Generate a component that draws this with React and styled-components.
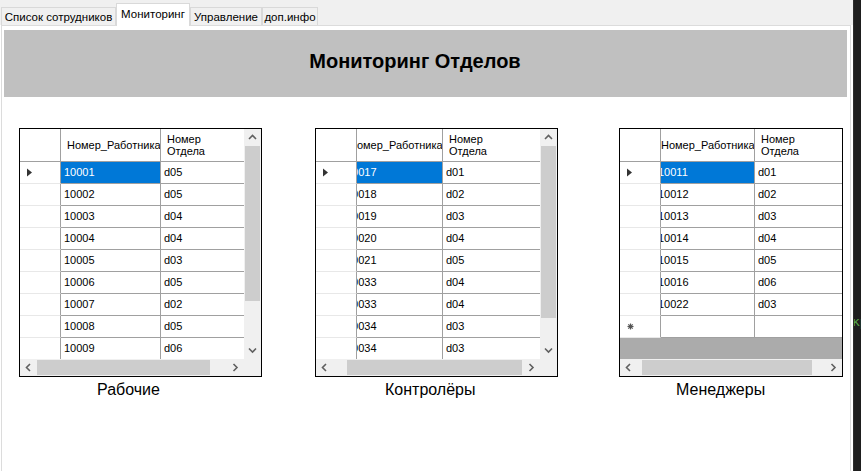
import React from "react";
import styled, { createGlobalStyle } from "styled-components";

const GlobalStyle = createGlobalStyle`
  html, body {
    margin: 0;
    padding: 0;
    overflow: hidden;
    background: #fff;
  }
  body {
    font-family: "Liberation Sans", Arial, sans-serif;
  }
`;

const Screen = styled.div`
  display: flex;
  width: 861px;
  height: 471px;
  overflow: hidden;
`;

const Window = styled.div`
  width: 853px;
  flex-shrink: 0;
  display: flex;
  flex-direction: column;
  background: #fff;
`;

const TabStrip = styled.div`
  height: 25px;
  flex-shrink: 0;
  background: #f0f0f0;
  display: flex;
  align-items: flex-end;
  padding-left: 1px;
  position: relative;
  z-index: 1;
`;

const Tab = styled.div`
  box-sizing: border-box;
  width: ${(p) => p.$w}px;
  height: ${(p) => (p.$active ? 23 : 18)}px;
  margin-bottom: ${(p) => (p.$active ? -1 : 0)}px;
  border: 1px solid #d9d9d9;
  border-bottom: none;
  background: ${(p) => (p.$active ? "#fff" : "#f0f0f0")};
  font-size: 11.5px;
  color: #000;
  display: flex;
  align-items: center;
  justify-content: center;
  padding-bottom: ${(p) => (p.$active ? 3 : 0)}px;
  white-space: nowrap;
`;

const TabPage = styled.div`
  flex: 1;
  margin: 0 2px 0 1px;
  border: 1px solid #dcdcdc;
  border-bottom: none;
  background: #fff;
  padding: 4px 3px 0 2px;
  display: flex;
  flex-direction: column;
`;

const TitlePanel = styled.div`
  height: 67px;
  background: #c0c0c0;
  display: flex;
  align-items: center;
  justify-content: center;
  padding: 0 21px 4px 0;
  box-sizing: border-box;
`;

const Title = styled.h1`
  margin: 0;
  font-size: 20px;
  font-weight: bold;
  color: #000;
`;

const GridsRow = styled.div`
  display: flex;
  align-items: flex-start;
  margin-top: 31px;
`;

const Group = styled.div`
  display: flex;
  flex-direction: column;
  margin-left: ${(p) => p.$ml}px;
`;

const Caption = styled.div`
  font-size: 16px;
  color: #000;
  margin-top: 4px;
  padding-left: ${(p) => p.$indent}px;
`;

const Frame = styled.div`
  box-sizing: border-box;
  width: ${(p) => p.$w}px;
  height: 249px;
  border: 1px solid #000;
  display: grid;
  grid-template-columns: ${(p) => (p.$vscroll ? "1fr 17px" : "1fr")};
  grid-template-rows: 1fr 17px;
`;

const Viewport = styled.div`
  overflow: hidden;
  background: #ababab;
  font-size: 11px;
  color: #000;
`;

const Row = styled.div`
  display: flex;
  height: ${(p) => (p.$head ? 33 : 22)}px;
`;

const RowHead = styled.div`
  box-sizing: border-box;
  width: 41px;
  flex-shrink: 0;
  background: #fff;
  border-right: 1px solid #a0a0a0;
  border-bottom: 1px solid ${(p) => (p.$head ? "#a0a0a0" : "#e8e8e8")};
  display: flex;
  align-items: center;
  padding-left: 7px;
`;

const Clip = styled.div`
  flex: 1;
  overflow: hidden;
`;

const Cells = styled.div`
  display: flex;
  height: 100%;
  margin-left: -${(p) => p.$offset}px;
`;

const Cell = styled.div`
  box-sizing: border-box;
  width: 100px;
  flex-shrink: 0;
  height: 100%;
  border-right: 1px solid #a0a0a0;
  border-bottom: 1px solid #a0a0a0;
  background: ${(p) => (p.$sel ? "#0078d7" : "#fff")};
  color: ${(p) => (p.$sel ? "#fff" : "#000")};
  display: flex;
  align-items: center;
  padding: 0 0 1px 3px;
  white-space: nowrap;
  overflow: hidden;
`;

const HeadCell = styled(Cell)`
  padding: 0 0 1px 6px;
  line-height: 12px;
`;

const VScroll = styled.div`
  background: #f0f0f0;
  display: flex;
  flex-direction: column;
`;

const HScroll = styled.div`
  background: #f0f0f0;
  display: flex;
`;

const Arrow = styled.div`
  width: 17px;
  height: 17px;
  flex-shrink: 0;
  display: flex;
  align-items: center;
  justify-content: center;
`;

const Track = styled.div`
  flex: 1;
  display: flex;
  flex-direction: ${(p) => (p.$vertical ? "column" : "row")};
`;

const Thumb = styled.div`
  background: #cdcdcd;
  flex-shrink: 0;
  ${(p) =>
    p.$vertical
      ? `margin: ${p.$start}px 1px 0 1px; height: ${p.$size}px;`
      : `margin: 1px 0 1px ${p.$start}px; width: ${p.$size}px;`}
`;

const Corner = styled.div`
  background: #f0f0f0;
`;

const DarkStrip = styled.div`
  flex: 1;
  background: #1e1e1e;
  border-left: 1px solid #2d2d2d;
  overflow: hidden;
`;

const CodeText = styled.div`
  margin: 314px 0 0 -2px;
  font-family: "DejaVu Sans Mono", monospace;
  font-size: 13px;
  color: #57a64a;
  white-space: nowrap;
`;

const Chevron = ({ dir }) => {
  const pts = {
    up: "1,5 4.5,1.5 8,5",
    down: "1,1.5 4.5,5 8,1.5",
    left: "5,1 1.5,4.5 5,8",
    right: "1.5,1 5,4.5 1.5,8",
  }[dir];
  const vertical = dir === "up" || dir === "down";
  return (
    <svg width={vertical ? 9 : 7} height={vertical ? 7 : 9}>
      <polyline points={pts} fill="none" stroke="#606060" strokeWidth="1.6" />
    </svg>
  );
};

const Indicator = () => (
  <svg width="5" height="9">
    <polygon points="0,0.5 5,4.5 0,8.5" fill="#333" />
  </svg>
);

const NewRowMark = () => (
  <svg width="7" height="7">
    <g stroke="#555" strokeWidth="1.2">
      <line x1="3.5" y1="0.5" x2="3.5" y2="6.5" />
      <line x1="0.5" y1="3.5" x2="6.5" y2="3.5" />
      <line x1="1.3" y1="1.3" x2="5.7" y2="5.7" />
      <line x1="5.7" y1="1.3" x2="1.3" y2="5.7" />
    </g>
  </svg>
);

function DataGrid({ width, rows, offset, vthumb, hthumb, newRow }) {
  return (
    <Frame $w={width} $vscroll={!!vthumb}>
      <Viewport>
        <Row $head>
          <RowHead $head />
          <Clip>
            <Cells $offset={offset}>
              <HeadCell>Номер_Работника</HeadCell>
              <HeadCell>
                Номер
                <br />
                Отдела
              </HeadCell>
            </Cells>
          </Clip>
        </Row>
        {rows.map(([id, dep], i) => (
          <Row key={i}>
            <RowHead>{i === 0 && <Indicator />}</RowHead>
            <Clip>
              <Cells $offset={offset}>
                <Cell $sel={i === 0}>{id}</Cell>
                <Cell>{dep}</Cell>
              </Cells>
            </Clip>
          </Row>
        ))}
        {newRow && (
          <Row>
            <RowHead>
              <NewRowMark />
            </RowHead>
            <Clip>
              <Cells $offset={offset}>
                <Cell />
                <Cell />
              </Cells>
            </Clip>
          </Row>
        )}
      </Viewport>
      {vthumb && (
        <VScroll>
          <Arrow>
            <Chevron dir="up" />
          </Arrow>
          <Track $vertical>
            <Thumb $vertical $start={vthumb[0]} $size={vthumb[1]} />
          </Track>
          <Arrow>
            <Chevron dir="down" />
          </Arrow>
        </VScroll>
      )}
      <HScroll>
        <Arrow>
          <Chevron dir="left" />
        </Arrow>
        <Track>
          <Thumb $start={hthumb[0]} $size={hthumb[1]} />
        </Track>
        <Arrow>
          <Chevron dir="right" />
        </Arrow>
      </HScroll>
      {vthumb && <Corner />}
    </Frame>
  );
}

const workers = [
  ["10001", "d05"],
  ["10002", "d05"],
  ["10003", "d04"],
  ["10004", "d04"],
  ["10005", "d03"],
  ["10006", "d05"],
  ["10007", "d02"],
  ["10008", "d05"],
  ["10009", "d06"],
];

const controllers = [
  ["10017", "d01"],
  ["10018", "d02"],
  ["10019", "d03"],
  ["10020", "d04"],
  ["10021", "d05"],
  ["10033", "d04"],
  ["10033", "d04"],
  ["10034", "d03"],
  ["10034", "d03"],
];

const managers = [
  ["10011", "d01"],
  ["10012", "d02"],
  ["10013", "d03"],
  ["10014", "d04"],
  ["10015", "d05"],
  ["10016", "d06"],
  ["10022", "d03"],
];

export default function App() {
  return (
    <>
      <GlobalStyle />
      <Screen>
        <Window>
          <TabStrip>
            <Tab $w={115}>Список сотрудников</Tab>
            <Tab $w={74} $active>
              Мониторинг
            </Tab>
            <Tab $w={72}>Управление</Tab>
            <Tab $w={56}>доп.инфо</Tab>
          </TabStrip>
          <TabPage>
            <TitlePanel>
              <Title>Мониторинг Отделов</Title>
            </TitlePanel>
            <GridsRow>
              <Group $ml={15}>
                <DataGrid
                  width={243}
                  rows={workers}
                  offset={0}
                  vthumb={[0, 155]}
                  hthumb={[0, 173]}
                />
                <Caption $indent={78}>Рабочие</Caption>
              </Group>
              <Group $ml={53}>
                <DataGrid
                  width={243}
                  rows={controllers}
                  offset={14}
                  vthumb={[0, 172]}
                  hthumb={[14, 175]}
                />
                <Caption $indent={70}>Контролёры</Caption>
              </Group>
              <Group $ml={61}>
                <DataGrid
                  width={224}
                  rows={managers}
                  offset={6}
                  hthumb={[5, 170]}
                  newRow
                />
                <Caption $indent={57}>Менеджеры</Caption>
              </Group>
            </GridsRow>
          </TabPage>
        </Window>
        <DarkStrip>
          <CodeText>кр</CodeText>
        </DarkStrip>
      </Screen>
    </>
  );
}
